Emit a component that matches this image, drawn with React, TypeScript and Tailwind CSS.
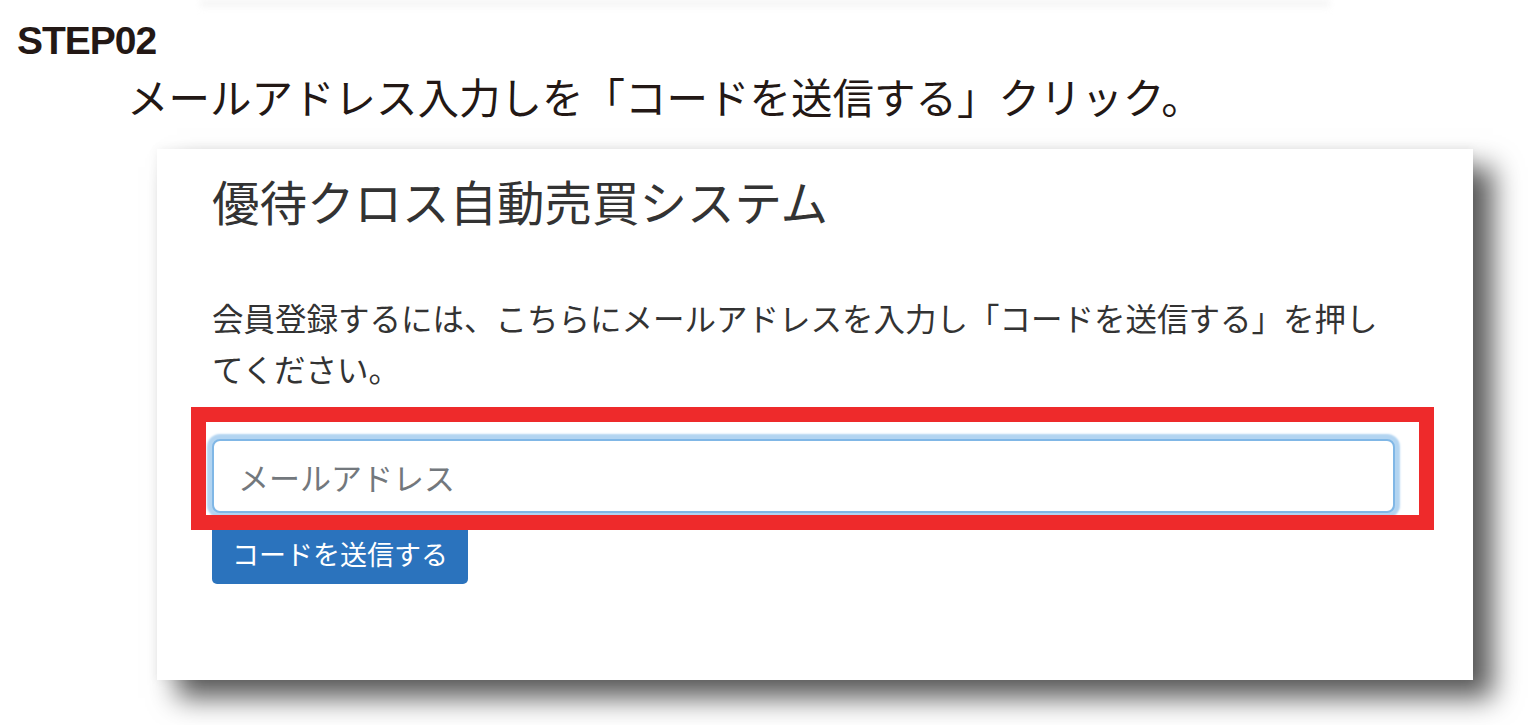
export default function App() {
  return (
    <div className="min-h-[725px] bg-white text-[#231815] font-['Noto_Sans_CJK_JP','Noto_Sans',sans-serif] overflow-hidden">
      {/* shadow left by the previous step's card */}
      <div className="ml-[200px] w-[1130px] h-[10px] bg-gradient-to-b from-[#f1f1f1] to-white blur-[3px]" />

      {/* Step heading */}
      <h2 className="mt-[11px] pl-[17px] text-[39px] leading-none font-bold tracking-[-1px] font-['Liberation_Sans',Arial,sans-serif]">
        STEP02
      </h2>
      <p className="mt-[16px] pl-[127px] text-[41.5px] leading-none font-normal">
        メールアドレス入力しを「コードを送信する」クリック。
      </p>

      {/* Screenshot card */}
      <div className="mt-[31px] ml-[157px] w-[1316px] h-[531px] bg-white shadow-[20px_18px_26px_rgba(0,0,0,0.65),0_0_10px_rgba(0,0,0,0.06)] pt-[28px] pl-[55px] pr-[78px] text-[#333333]">
        <h1 className="text-[47.5px] leading-none font-normal">優待クロス自動売買システム</h1>

        <p className="mt-[68px] text-[31.5px] leading-[51px]">
          会員登録するには、こちらにメールアドレスを入力し「コードを送信する」を押してください。
        </p>

        <div className="relative mt-[45px]">
          <input
            type="email"
            placeholder="メールアドレス"
            className="block w-full h-[74px] rounded-lg border-2 border-[#80b7e6] bg-white pl-[24px] text-[31px] text-[#333333] placeholder:text-[#73787d] shadow-[0_0_2px_5px_#b2d4f1] outline-none"
          />
          {/* highlight frame */}
          <div className="absolute z-10 -left-[21px] -top-[32px] -right-[39px] -bottom-[17px] border-[15px] border-[#ee2a2b] pointer-events-none" />
        </div>

        <button className="mt-[10px] h-[61px] px-[20px] rounded-[5px] bg-[#2b73bd] text-white text-[27px] leading-none flex items-center">
          コードを送信する
        </button>
      </div>
    </div>
  );
}
